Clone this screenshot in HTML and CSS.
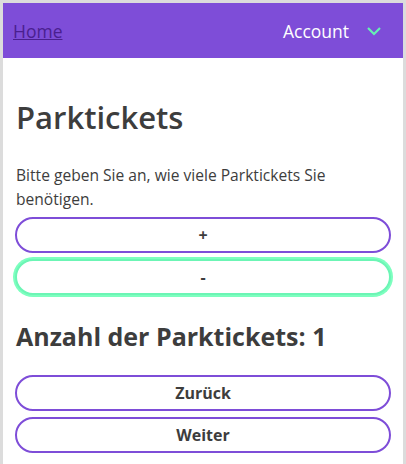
FILE: index.html
```html
<!DOCTYPE html>
<html lang="de">
<head>
<meta charset="utf-8">
<title>Parktickets</title>
<link rel="stylesheet" href="styles.css">
</head>
<body>
<div class="frame">
  <header class="topbar">
    <a class="home" href="#">Home</a>
    <div class="account">
      <span>Account</span>
      <svg class="chev" width="16" height="10" viewBox="0 0 16 10"><path d="M2 2 L8 8 L14 2" fill="none" stroke="#66f0b4" stroke-width="2.2"/></svg>
    </div>
  </header>
  <main class="content">
    <h1 class="title">Parktickets</h1>
    <p class="intro">Bitte geben Sie an, wie viele Parktickets Sie benötigen.</p>
    <div class="stack">
      <button class="btn">+</button>
      <button class="btn focus">-</button>
    </div>
    <h2 class="count">Anzahl der Parktickets: 1</h2>
    <div class="stack nav">
      <button class="btn">Zurück</button>
      <button class="btn">Weiter</button>
    </div>
  </main>
</div>
</body>
</html>
```

FILE: styles.css
```css
html, body {
  margin: 0;
  padding: 0;
  background: #fff;
}
body {
  font-family: "Open Sans", "Noto Sans", sans-serif;
  color: #3d3d3d;
}
.frame {
  border: 3px solid #dcdcdc;
  border-bottom: none;
  height: 464px;
  box-sizing: border-box;
  overflow: hidden;
}
.topbar {
  height: 55px;
  background: #7e4dd8;
  display: flex;
  align-items: center;
  justify-content: space-between;
  padding: 0 21px 0 10px;
}
.home {
  color: #4a1f8f;
  font-size: 17.5px;
  text-decoration: underline;
}
.account {
  display: flex;
  align-items: center;
  gap: 17px;
  color: #fff;
  font-size: 17.5px;
}
.chev { display: block; }
.content {
  padding: 0 12px;
}
.title {
  font-size: 31px;
  font-weight: 600;
  margin: 37px 0 0 1px;
  line-height: 44px;
}
.intro {
  font-size: 15.6px;
  line-height: 24px;
  margin: 24px 0 6px 1px;
}
.stack {
  display: flex;
  flex-direction: column;
  gap: 6px;
}
.btn {
  font-family: inherit;
  font-size: 16px;
  font-weight: 700;
  color: #3d3d3d;
  background: #fff;
  border: 2px solid #7e4dd8;
  border-radius: 18px;
  height: 36px;
  width: 100%;
}
.btn.focus {
  border-color: #6cf5b5;
  box-shadow: 0 0 0 2px #7dffbf;
}
.count {
  font-size: 25px;
  font-weight: 700;
  margin: 24px 0 22px 1px;
  line-height: 34px;
}
```
